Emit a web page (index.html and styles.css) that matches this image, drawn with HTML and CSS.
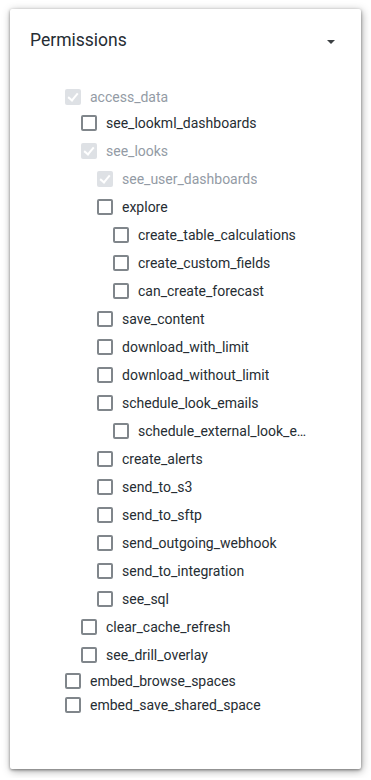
FILE: index.html
```html
<!DOCTYPE html>
<html>
<head>
  <title>Permissions</title>
  <link rel="stylesheet" href="styles.css">
</head>
<body>
  <div class="card">
    <div class="card-header">
      <span class="title">Permissions</span>
      <span class="caret"></span>
    </div>

    <ul class="tree root">
      <li>
        <div class="row disabled"><span class="box checked"></span><span class="label">access_data</span></div>
        <ul class="tree">
          <li><div class="row"><span class="box"></span><span class="label">see_lookml_dashboards</span></div></li>
          <li>
            <div class="row disabled"><span class="box checked"></span><span class="label">see_looks</span></div>
            <ul class="tree">
              <li><div class="row disabled"><span class="box checked"></span><span class="label">see_user_dashboards</span></div></li>
              <li>
                <div class="row"><span class="box"></span><span class="label">explore</span></div>
                <ul class="tree">
                  <li><div class="row"><span class="box"></span><span class="label">create_table_calculations</span></div></li>
                  <li><div class="row"><span class="box"></span><span class="label">create_custom_fields</span></div></li>
                  <li><div class="row"><span class="box"></span><span class="label">can_create_forecast</span></div></li>
                </ul>
              </li>
              <li><div class="row"><span class="box"></span><span class="label">save_content</span></div></li>
              <li><div class="row"><span class="box"></span><span class="label">download_with_limit</span></div></li>
              <li><div class="row"><span class="box"></span><span class="label">download_without_limit</span></div></li>
              <li>
                <div class="row"><span class="box"></span><span class="label">schedule_look_emails</span></div>
                <ul class="tree">
                  <li><div class="row"><span class="box"></span><span class="label">schedule_external_look_emails</span></div></li>
                </ul>
              </li>
              <li><div class="row"><span class="box"></span><span class="label">create_alerts</span></div></li>
              <li><div class="row"><span class="box"></span><span class="label">send_to_s3</span></div></li>
              <li><div class="row"><span class="box"></span><span class="label">send_to_sftp</span></div></li>
              <li><div class="row"><span class="box"></span><span class="label">send_outgoing_webhook</span></div></li>
              <li><div class="row"><span class="box"></span><span class="label">send_to_integration</span></div></li>
              <li><div class="row"><span class="box"></span><span class="label">see_sql</span></div></li>
            </ul>
          </li>
          <li><div class="row"><span class="box"></span><span class="label">clear_cache_refresh</span></div></li>
          <li><div class="row"><span class="box"></span><span class="label">see_drill_overlay</span></div></li>
        </ul>
      </li>
      <li><div class="row"><span class="box"></span><span class="label">embed_browse_spaces</span></div></li>
      <li><div class="row"><span class="box"></span><span class="label">embed_save_shared_space</span></div></li>
    </ul>
  </div>
</body>
</html>
```

FILE: styles.css
```css
html, body {
  padding: 0;
  margin: 0;
}

body {
  background: #fff;
  font-family: Roboto, "Noto Sans", sans-serif;
  color: #262d33;
}

.card {
  box-sizing: border-box;
  width: 351px;
  height: 760px;
  margin: 9px 10px;
  background: #fff;
  border-radius: 2px;
  box-shadow: 0 1px 3px rgba(0,0,0,0.4), 1px 2px 8px rgba(0,0,0,0.35);
}

.card-header {
  display: flex;
  justify-content: space-between;
  align-items: center;
  padding: 19px 26px 0 20px;
}

.title {
  font-size: 17.5px;
  line-height: 24px;
  color: #262d33;
}

.caret {
  width: 0;
  height: 0;
  margin-top: 4px;
  border-left: 4px solid transparent;
  border-right: 4px solid transparent;
  border-top: 4px solid #3c4043;
}

.tree {
  list-style: none;
  margin: 0;
  padding: 0 0 0 16px;
}

.root {
  width: 244px;
  margin-top: 33px;
  padding-left: 55px;
}

.row {
  display: flex;
  align-items: center;
  gap: 9px;
  height: 24px;
  font-size: 14px;
}

.tree .tree .row {
  height: 28px;
}

.label {
  white-space: nowrap;
  overflow: hidden;
  text-overflow: ellipsis;
  min-width: 0;
}

.box {
  box-sizing: border-box;
  flex: none;
  width: 16px;
  height: 16px;
  border: 2px solid #80868b;
  border-radius: 2px;
  position: relative;
}

.box.checked {
  border: 0;
  background: #dee1e5;
}

.box.checked::after {
  content: "";
  position: absolute;
  left: 5px;
  top: 2px;
  width: 4px;
  height: 8px;
  border-right: 2px solid #fff;
  border-bottom: 2px solid #fff;
  transform: rotate(40deg);
}

.disabled .label {
  color: #939ba5;
}
```
